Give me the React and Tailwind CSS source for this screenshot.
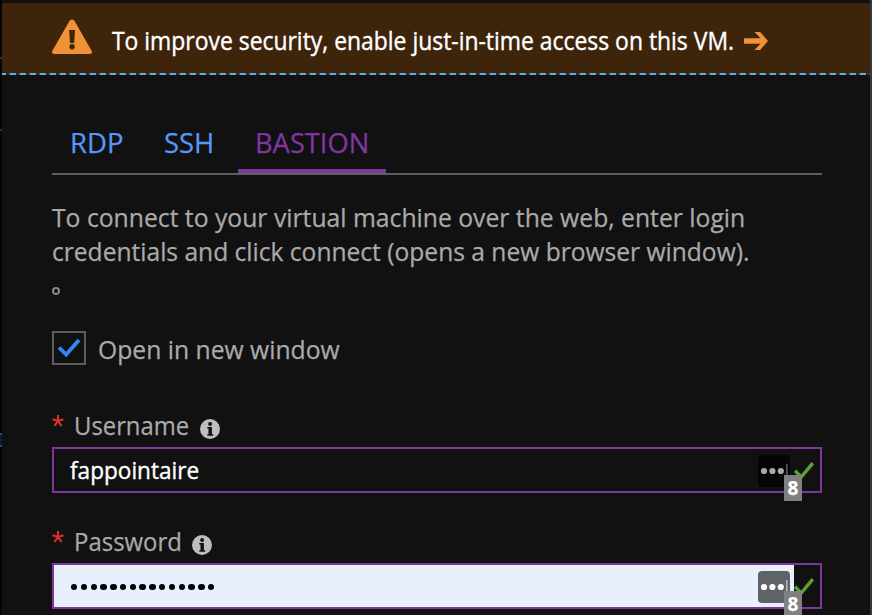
import { useLayoutEffect, useRef } from "react";

// Renders one line of text condensed or widened to fill its box.
function Line({ className, children }) {
  const outer = useRef(null);
  const inner = useRef(null);
  useLayoutEffect(() => {
    const ratio = outer.current.clientWidth / inner.current.offsetWidth;
    inner.current.style.transform = `scaleX(${ratio})`;
  }, []);
  return (
    <span ref={outer} className={`block shrink-0 whitespace-nowrap ${className}`}>
      <span ref={inner} className="inline-block origin-left">{children}</span>
    </span>
  );
}

function Warning() {
  return (
    <svg className="h-9 w-10 shrink-0" viewBox="0 0 40 36">
      <path d="M17.3 2.2Q20-1.2 22.7 2.2L39.6 31.8Q40.8 35 37.5 35H2.5Q-.8 35 .4 31.8Z" fill="#f19237" />
      <path d="M17.2 11h5.8l-.8 13h-4.2z" fill="#3d240a" />
      <circle cx="20.1" cy="27.8" r="2.7" fill="#3d240a" />
    </svg>
  );
}

function Info() {
  return (
    <svg className="size-5 shrink-0" viewBox="0 0 20 20">
      <circle cx="10" cy="10" r="10" fill="#bebebe" />
      <circle cx="10.1" cy="4.9" r="2" fill="#111" />
      <path d="M7.3 8h4.6v7.2h1.3v1.5H7.3v-1.5h1.2V9.5H7.3z" fill="#111" />
    </svg>
  );
}

function Asterisk() {
  return (
    <svg className="mt-px size-3 shrink-0" viewBox="0 0 12 12">
      <path d="M6 0v6M6 6L.6 4.3M6 6l5.4-1.7M6 6l-3.6 5M6 6l3.6 5" stroke="#e0302d" strokeWidth="2.1" fill="none" />
    </svg>
  );
}

function Field({ label, labelWidth, gap, filled, children }) {
  return (
    <div className="h-[116px]">
      <div className="flex h-[33px] items-start">
        <Asterisk />
        <Line className={`ml-2.5 mt-[-7px] text-[25.5px] leading-[36px] text-[#aaa] ${labelWidth}`}>{label}</Line>
        <div className={`mt-[5px] flex ${gap}`}><Info /></div>
      </div>
      <div className="relative flex h-[46px] w-[770px] border-2 border-[#8036a0]">
        <div className={`flex w-[740px] items-center justify-between pl-4 pr-1 ${filled ? "bg-[#e8f0fe]" : ""}`}>
          {children}
          <svg className="mt-0.5 size-8 shrink-0" viewBox="0 0 32 32">
            <rect width="32" height="32" rx="4" fill={filled ? "#5f6368" : "#050505"} />
            <g fill={filled ? "#fff" : "#a9a9a9"}>
              <circle cx="6" cy="16" r="3.1" />
              <circle cx="14.4" cy="16" r="3.1" />
              <circle cx="22.8" cy="16" r="3.1" />
              <rect x="28.2" y="9" width="1.3" height="14" opacity=".65" />
            </g>
          </svg>
        </div>
        <svg className="mt-3 h-5 w-5 shrink-0" viewBox="0 0 20 20">
          <path d="M1 9.7l6.2 6.3L18.8 2.2" fill="none" stroke="#5da22e" strokeWidth="3.4" />
        </svg>
        <span className="absolute left-[730px] top-[26px] flex h-[26px] w-[18px] items-center justify-center bg-[#808080] pt-px font-['Noto_Sans',sans-serif] text-[19px] font-bold leading-none text-white">
          8
        </span>
      </div>
    </div>
  );
}

export default function App() {
  return (
    <div className="flex h-[615px] w-[872px] overflow-hidden bg-[#111] font-['Open_Sans',sans-serif] [-webkit-text-stroke:0.25px]">
      <div className="w-0.5 shrink-0 bg-[#050505]">
        <div className="mt-[57px] h-0.5 bg-[#333]" />
        <div className="mt-[70px] h-0.5 bg-[#333]" />
        <div className="mt-[302px] h-[14px] border-y-2 border-[#29497c] bg-[#101b2d]" />
      </div>
      <div className="w-[868px] shrink-0 pt-[3px]">
        <div className="flex h-[70px] items-start bg-[#3d240a] pl-[50px] pt-4">
          <Warning />
          <Line className="ml-5 mt-[3px] w-[622px] text-[25px] leading-[36px] text-white [-webkit-text-stroke:0.4px]">To improve security, enable just-in-time access on this VM.</Line>
          <svg className="ml-2.5 mt-[13px] h-[18px] w-6 shrink-0" viewBox="0 0 24 18">
            <path d="M0 6.3h16.5L10.5 0h5.7L24 9l-7.8 9h-5.7l6-6.3H0z" fill="#f19237" />
          </svg>
        </div>
        <div className="h-0.5 bg-[repeating-linear-gradient(90deg,#50b4ec_0_3px,#4b5f61_3px_4px,#3d240a_4px_7px,#4b5f61_7px_8px,#50b4ec_8px_10px)]">
          <div className="h-0.5 bg-[repeating-linear-gradient(90deg,#50b4ec_0_4px,transparent_4px_8px,#50b4ec_8px_10px)]" />
        </div>
        <div className="pl-[50px]">
          <div className="mt-[50px] flex h-[50px] w-[770px] border-b-2 border-[#5d5d5d] text-[28px] leading-[34px] text-[#5897fa]">
            <Line className="ml-[18px] w-[53px]">RDP</Line>
            <Line className="ml-[41px] w-[50px]">SSH</Line>
            <div className="ml-6 w-[148px] border-b-4 border-[#8036a0] pl-[17px] text-[#8036a0]">
              <Line className="w-[114px]">BASTION</Line>
            </div>
          </div>
          <div className="mt-[25px] text-[25px] leading-[34px] text-[#aaa]">
            <Line className="w-[693px]">To connect to your virtual machine over the web, enter login</Line>
            <Line className="w-[697px]">credentials and click connect (opens a new browser window).</Line>
          </div>
          <div className="mt-[19px] size-2 rounded-full border-2 border-[#888]" />
          <div className="mt-9 flex h-[34px]">
            <div className="flex size-[34px] items-center justify-center border-2 border-[#5d5d5d]">
              <svg className="h-5 w-6" viewBox="0 0 24 20">
                <path d="M2 9.5l7.2 7.1L22 2" fill="none" stroke="#3189f5" strokeWidth="3.8" />
              </svg>
            </div>
            <Line className="ml-3 w-[242px] text-[25.5px] leading-[36px] text-[#aaa]">Open in new window</Line>
          </div>
          <div className="mt-[49px]">
            <Field label="Username" labelWidth="w-[115px]" gap="ml-[11px]">
              <Line className="w-[129px] text-[24px] leading-[36px] text-white [-webkit-text-stroke:0.4px]">fappointaire</Line>
            </Field>
            <Field label="Password" labelWidth="w-[108px]" gap="ml-2.5" filled>
              <div className="flex gap-[3.4px] pl-px pt-0.5">
                {Array.from({ length: 15 }, (_, i) => (
                  <span key={i} className="size-[6.4px] rounded-full bg-black" />
                ))}
              </div>
            </Field>
          </div>
        </div>
      </div>
      <div className="w-0.5 shrink-0 bg-[#383838]" />
    </div>
  );
}
